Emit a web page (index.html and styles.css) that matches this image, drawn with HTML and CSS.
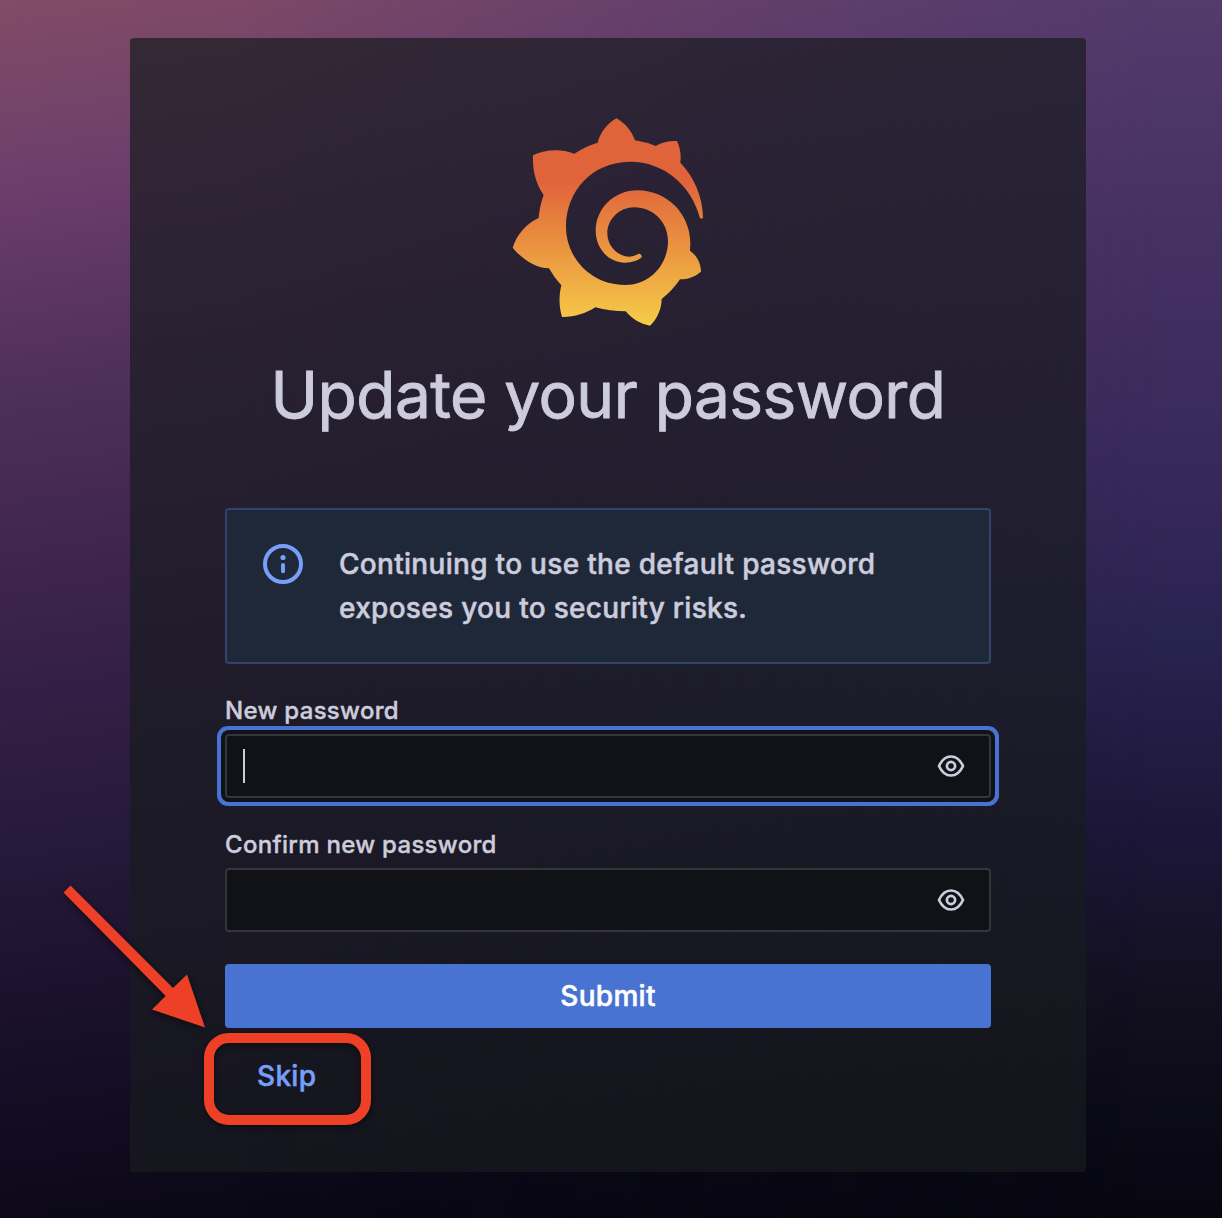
FILE: index.html
```html
<!DOCTYPE html>
<html lang="en">
<head>
<meta charset="utf-8">
<title>Grafana</title>
<link rel="stylesheet" href="styles.css">
</head>
<body>
<main class="login">
  <section class="panel">
    <svg class="logo" viewBox="0 0 660 690" role="img" aria-label="Grafana">
      <defs>
        <linearGradient id="flame" gradientUnits="userSpaceOnUse" x1="0" y1="665" x2="0" y2="230">
          <stop offset="0" stop-color="#f6cd48"/>
          <stop offset="1" stop-color="#e0643a"/>
        </linearGradient>
      </defs>
      <path fill="url(#flame)" d="M349 40C376 55 396 79 405 106Q437 111 467 123C486 111 508 107 531 108C540 127 544 149 541 173C583 217 608 275 609 338Q605 344 600 339C574 239 489 169 389 170C279 171 198 255 198 365C199 461 273 539 375 540C448 540 504 482 504 407C503 350 459 307 403 307C358 307 322 343 322 386C323 424 353 454 388 455Q401 455 414 447C420 444 426 449 425 456C423 461 411 466 405 468Q391 473 375 473C326 473 288 431 287 378C287 311 342 256 413 256C502 257 571 327 571 415L570 437C589 450 603 474 603 500C584 516 563 523 540 523Q519 555 485 582C485 611 472 641 450 662C420 657 397 642 377 619Q330 619 286 607C257 626 221 637 186 636C177 606 176 573 184 541Q163 519 147 490C107 489 69 465 38 428C50 389 80 355 116 339Q119 302 131 270C107 236 97 195 99 151C139 132 184 132 223 146Q256 124 293 113C300 84 321 56 349 40Z"/>
    </svg>
    <h1 class="title">Update your password</h1>

    <div class="alert">
      <svg class="alert-icon" viewBox="0 0 40 40">
        <circle cx="20" cy="20" r="18" fill="none" stroke="#769ff9" stroke-width="4"/>
        <circle cx="20" cy="13.500" r="2.600" fill="#769ff9"/>
        <rect x="18" y="19" width="4" height="10.200" rx="2" fill="#769ff9"/>
      </svg>
      <p class="alert-text">Continuing to use the default password<br>exposes you to security risks.</p>
    </div>

    <div class="label">New password</div>
    <div class="field field-focused">
      <span class="caret"></span>
      <svg class="eye" viewBox="0 0 28 24">
        <path d="M2 12Q6.300 2.500 14 2.500T26 12Q21.700 21.500 14 21.500T2 12Z"/>
        <circle cx="14" cy="12" r="4.100"/>
      </svg>
    </div>

    <div class="label">Confirm new password</div>
    <div class="field">
      <svg class="eye" viewBox="0 0 28 24">
        <path d="M2 12Q6.300 2.500 14 2.500T26 12Q21.700 21.500 14 21.500T2 12Z"/>
        <circle cx="14" cy="12" r="4.100"/>
      </svg>
    </div>

    <button class="submit" type="button">Submit</button>
    <button class="skip" type="button">Skip</button>
  </section>

  <div class="marker-box"></div>
  <svg class="marker-arrow" viewBox="0 0 150 150">
    <path fill="#ed4026" d="M13.500 6L20.500 -1L123 101.500L137 88L155 141L102 123L115.700 109.500Z" transform="translate(-1 5.500)"/>
  </svg>
</main>
</body>
</html>
```

FILE: styles.css
```css
* {
  box-sizing: border-box;
}

body {
  margin: 0;
  font-family: Inter, "Liberation Sans", sans-serif;
  color: #ccccdc;
}

.login {
  position: relative;
  width: 1222px;
  height: 1218px;
  padding: 38px 136px 0 130px;
  overflow: hidden;
  background: linear-gradient(172deg, #824b66 0%, #73436a 9%, #65396a 17%, #4f2f5c 28%, #39224b 45%, #281a3b 60%, #180f2a 75%, #0b0817 89%, #06040e 100%);
}

.login::before {
  content: "";
  position: absolute;
  inset: 0;
  background: linear-gradient(180deg, #533b6c 0%, #453062 20%, #37285a 40%, #292350 52%, #1c1739 68%, #12101f 82%, #090814 95%, #070611 100%);
  mask-image: linear-gradient(90deg, transparent 20%, #000 95%);
}

.panel {
  position: relative;
  display: flex;
  flex-direction: column;
  height: 1134px;
  padding: 67px 95px 0;
  border-radius: 4px;
  background: rgba(24, 27, 31, 0.7);
}

.logo {
  align-self: center;
  width: 220px;
  height: 230px;
  margin-right: -4px;
}

.title {
  margin: 20px -40px 0;
  font-size: 64px;
  font-weight: 400;
  line-height: 80px;
  letter-spacing: -0.54px;
  text-align: center;
  white-space: nowrap;
  -webkit-text-stroke: 0.9px #ccccdc;
}

.alert {
  display: flex;
  gap: 36px;
  height: 156px;
  margin-top: 73px;
  padding: 32px 36px;
  border: 2px solid #31456c;
  border-radius: 4px;
  background: #1f2838;
}

.alert-icon {
  flex: none;
  width: 40px;
  height: 40px;
  margin-top: 2px;
}

.alert-text {
  margin: 0;
  font-size: 28px;
  font-weight: 500;
  line-height: 44px;
  letter-spacing: 0.3px;
  white-space: nowrap;
  -webkit-text-stroke: 0.5px currentColor;
}

.label {
  margin-top: 35px;
  font-size: 24px;
  font-weight: 500;
  line-height: 24px;
  letter-spacing: 0.3px;
  -webkit-text-stroke: 0.4px currentColor;
}

.field {
  display: flex;
  align-items: center;
  height: 64px;
  margin-top: 11px;
  padding: 0 24px 0 16px;
  border: 2px solid #35363b;
  border-radius: 4px;
  background: #111217;
}

.field-focused {
  box-shadow: 0 0 0 4px #111217, 0 0 0 8px #4873d3;
}

.caret {
  width: 2px;
  height: 34px;
  background: #ccccdc;
}

.eye {
  width: 28px;
  height: 24px;
  margin-left: auto;
  fill: none;
  stroke: #ccccdc;
  stroke-width: 2.7;
  stroke-linejoin: round;
}

.submit,
.skip {
  height: 64px;
  padding: 0 32px;
  border: 0;
  border-radius: 4px;
  font: 500 28px/64px Inter, "Liberation Sans", sans-serif;
  letter-spacing: 0.3px;
  -webkit-text-stroke: 0.5px currentColor;
}

.submit {
  margin-top: 32px;
  background: #4873d3;
  color: #fff;
}

.skip {
  align-self: flex-start;
  margin-top: 16px;
  background: none;
  color: #769ff9;
}

.marker-box {
  position: absolute;
  left: 204px;
  top: 1033px;
  width: 167px;
  height: 92px;
  border: 10px solid #ed4026;
  border-radius: 25px;
  filter: drop-shadow(0 2px 3px rgba(0, 0, 0, 0.5));
}

.marker-arrow {
  position: absolute;
  left: 51px;
  top: 881px;
  width: 150px;
  height: 150px;
  overflow: visible;
  filter: drop-shadow(0 2px 3px rgba(0, 0, 0, 0.5));
}
```
